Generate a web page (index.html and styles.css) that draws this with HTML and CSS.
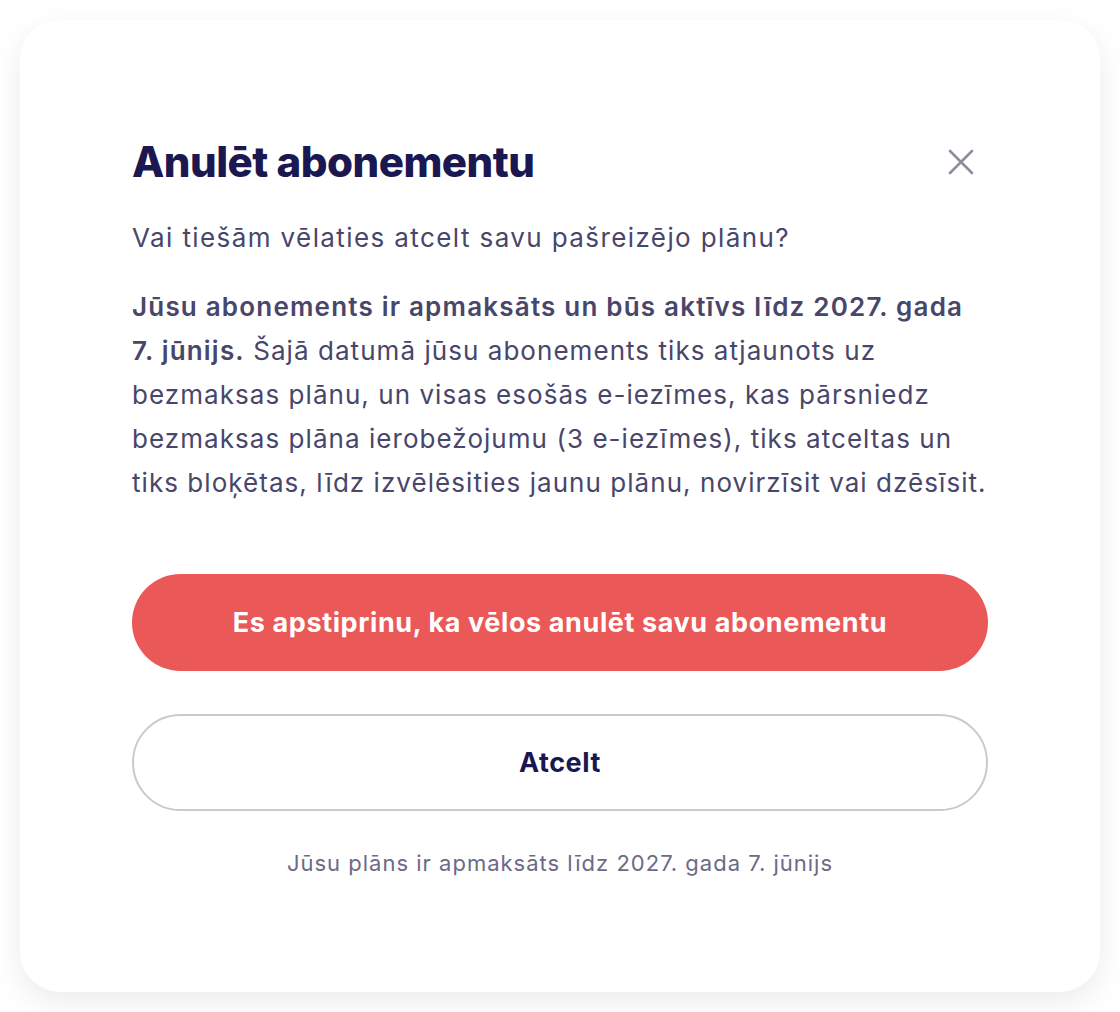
FILE: index.html
```html
<!DOCTYPE html>
<html lang="lv">
<head>
  <meta charset="UTF-8">
  <meta name="viewport" content="width=device-width, initial-scale=1.0">
  <title>Anulēt abonementu</title>
  <link rel="stylesheet" href="styles.css">
</head>
<body>
  <div class="modal">
    <div class="modal-head">
      <h2>Anulēt abonementu</h2>
      <button class="close" type="button" aria-label="Aizvērt">
        <svg width="26" height="26" viewBox="0 0 26 26" fill="none" stroke="#8e8d99" stroke-width="2.6" stroke-linecap="round">
          <path d="M2 2 L24 24 M24 2 L2 24"/>
        </svg>
      </button>
    </div>
    <p class="lead">Vai tiešām vēlaties atcelt savu pašreizējo plānu?</p>
    <p class="info"><strong>Jūsu abonements ir apmaksāts un būs aktīvs līdz 2027. gada 7. jūnijs.</strong> Šajā datumā jūsu abonements tiks atjaunots uz bezmaksas plānu, un visas esošās e-iezīmes, kas pārsniedz bezmaksas plāna ierobežojumu (3 e-iezīmes), tiks atceltas un tiks bloķētas, līdz izvēlēsities jaunu plānu, novirzīsit vai dzēsīsit.</p>
    <div class="actions">
      <button class="btn btn-danger" type="button">Es apstiprinu, ka vēlos anulēt savu abonementu</button>
      <button class="btn btn-outline" type="button">Atcelt</button>
    </div>
    <p class="note">Jūsu plāns ir apmaksāts līdz 2027. gada 7. jūnijs</p>
  </div>
</body>
</html>
```

FILE: styles.css
```css
body {
  font-family: Inter, "Noto Sans", sans-serif;
  margin: 0;
  padding: 20px;
  background-color: #fff;
  color: #48466a;
}
.modal {
  background: white;
  border-radius: 40px;
  box-shadow: 0 10px 30px rgba(0, 0, 0, 0.08);
  padding: 117px 112px 0;
  height: 972px;
  box-sizing: border-box;
}
.modal-head {
  display: flex;
  justify-content: space-between;
  align-items: center;
}
h2 {
  margin: 0;
  font-size: 42px;
  line-height: 50px;
  font-weight: 800;
  color: #1b1750;
  letter-spacing: -0.5px;
}
.close {
  background: none;
  border: none;
  padding: 0;
  margin-right: 14px;
  cursor: pointer;
  display: flex;
}
.lead {
  margin: 33px 0 0;
  font-size: 26px;
  line-height: 36px;
  letter-spacing: 1.4px;
}
.info {
  margin: 29px 0 0;
  font-size: 26px;
  line-height: 44px;
  letter-spacing: 1.05px;
}
.info strong {
  font-weight: 600;
  letter-spacing: 1.2px;
}
.actions {
  display: flex;
  flex-direction: column;
  gap: 43px;
  margin-top: 69px;
}
.btn {
  width: 100%;
  height: 97px;
  border-radius: 49px;
  font-family: inherit;
  font-size: 27px;
  font-weight: 700;
  letter-spacing: 0.6px;
  cursor: pointer;
}
.btn-danger {
  background-color: #ea5858;
  color: white;
  border: none;
}
.btn-outline {
  background: white;
  color: #1b1750;
  border: 2px solid #c9c9cf;
}
.note {
  margin: 37px 0 0;
  text-align: center;
  font-size: 22px;
  line-height: 30px;
  letter-spacing: 1px;
  color: #6c6a86;
}
```
